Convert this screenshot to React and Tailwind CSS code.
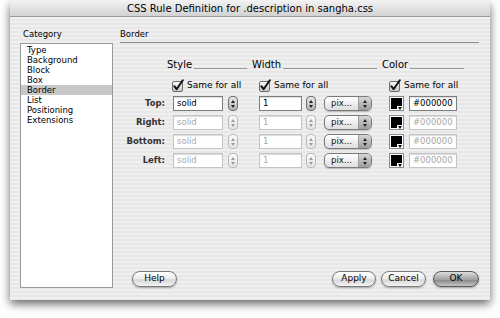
import { Fragment } from 'react'

const FONT = { fontFamily: '"DejaVu Sans", "Lucida Grande", sans-serif' }

const categories = ['Type', 'Background', 'Block', 'Box', 'Border', 'List', 'Positioning', 'Extensions']
const sides = ['Top', 'Right', 'Bottom', 'Left']

function Check({ className = '' }) {
  return (
    <svg width="13" height="13" viewBox="0 0 13 13" className={className}>
      <defs>
        <linearGradient id="cbg" x1="0" y1="0" x2="0" y2="1">
          <stop offset="0" stopColor="#ffffff" />
          <stop offset="1" stopColor="#c4c4c4" />
        </linearGradient>
      </defs>
      <rect x="0.5" y="2.5" width="10" height="10" rx="1.5" fill="url(#cbg)" stroke="#6d6d6d" />
      <path d="M2.3 7.2 L4.6 10.2 L10.8 1.2" fill="none" stroke="#111" strokeWidth="2" strokeLinecap="round" strokeLinejoin="round" />
    </svg>
  )
}

function Stepper({ off }) {
  return (
    <div
      className={`w-[10px] h-[15px] rounded-[4px] border flex flex-col items-center justify-center gap-[2px] ${
        off
          ? 'border-[#b8b8b8] bg-[linear-gradient(#fafafa,#e6e6e6)]'
          : 'border-[#707070] bg-[linear-gradient(#e8e8e8,#b4b4b4)]'
      }`}
    >
      <svg width="4" height="3" viewBox="0 0 4 3">
        <path d="M0 3 L2 0 L4 3 Z" fill={off ? '#9a9a9a' : '#222'} />
      </svg>
      <svg width="4" height="3" viewBox="0 0 4 3">
        <path d="M0 0 L2 3 L4 0 Z" fill={off ? '#9a9a9a' : '#222'} />
      </svg>
    </div>
  )
}

function Field({ value, off, w }) {
  return (
    <div
      className={`${w} h-[15px] bg-white border px-[3px] text-[8.5px] leading-[13px] shadow-[inset_0_1px_1px_rgba(0,0,0,0.15)] ${
        off ? 'border-[#c4c4c4] text-[#a8a8a8]' : 'border-[#7e7e7e] text-black'
      }`}
    >
      {value}
    </div>
  )
}

function Popup() {
  return (
    <div className="w-[48px] h-[15px] rounded-[5px] border border-[#7a7a7a] flex overflow-hidden bg-[linear-gradient(#ffffff,#dedede)] shadow-[0_1px_1px_rgba(0,0,0,0.2)]">
      <div className="flex-1 pl-[6px] text-[8.5px] leading-[13px] text-[#111]">pix...</div>
      <div className="w-[13px] flex flex-col items-center justify-center gap-[2px] bg-[linear-gradient(#d6d6d6,#9e9e9e)] border-l border-[#9a9a9a]">
        <svg width="4" height="3" viewBox="0 0 4 3">
          <path d="M0 3 L2 0 L4 3 Z" fill="#222" />
        </svg>
        <svg width="4" height="3" viewBox="0 0 4 3">
          <path d="M0 0 L2 3 L4 0 Z" fill="#222" />
        </svg>
      </div>
    </div>
  )
}

function Swatch() {
  return (
    <div className="relative w-[15px] h-[15px] border border-[#8a8a8a] bg-white p-[1px]">
      <div className="w-full h-full bg-black" />
      <div className="absolute right-0 bottom-0 w-[6px] h-[4px] bg-white flex items-center justify-center">
        <svg width="4" height="3" viewBox="0 0 4 3">
          <path d="M0 0 L2 3 L4 0 Z" fill="#000" />
        </svg>
      </div>
    </div>
  )
}

function AquaButton({ children, w, dark }) {
  return (
    <div
      className={`${w} h-[16px] rounded-full border flex items-center justify-center text-[9px] text-black shadow-[0_1px_2px_rgba(0,0,0,0.3)] ${
        dark
          ? 'border-[#5a5a5a] bg-[linear-gradient(#dcdcdc,#a0a0a0_55%,#8c8c8c_60%,#c4c4c4)]'
          : 'border-[#7a7a7a] bg-[linear-gradient(#ffffff,#ececec_50%,#d6d6d6_55%,#f4f4f4)]'
      }`}
    >
      {children}
    </div>
  )
}

function Heading({ label, w }) {
  return (
    <div className={`${w} flex items-end`}>
      <span className="text-[10px] leading-[12px] text-black">{label}</span>
      <div className="flex-1 h-px bg-[#9a9a9a] ml-[2px] mb-[2px]" />
    </div>
  )
}

export default function App() {
  return (
    <div className="w-[500px] h-[318px] bg-white overflow-hidden" style={FONT}>
      <div className="ml-[10px] w-[480px] h-[300px] rounded-t-[5px] shadow-[0_4px_10px_rgba(0,0,0,0.6)] flex flex-col overflow-hidden">
        {/* title bar */}
        <div className="h-[17px] bg-[linear-gradient(#f3f3f3,#d2d2d2)] border-b border-[#9c9c9c] text-[10px] leading-[18px] text-center text-black">
          CSS Rule Definition for .description in sangha.css
        </div>

        <div className="flex-1 flex bg-[repeating-linear-gradient(#efefef_0px,#efefef_2px,#e7e7e7_2px,#e7e7e7_4px)]">
          {/* category list */}
          <div className="ml-[10px] w-[93px] pt-[11px] pb-[12px] flex flex-col">
            <div className="pl-[3px] h-[12px] text-[8.5px] leading-[12px] text-black">Category</div>
            <div className="mt-[3px] flex-1 bg-white border border-[#9a9a9a] pt-[1px]">
              {categories.map((c) => (
                <div
                  key={c}
                  className={`pl-[6px] h-[10px] text-[8.5px] leading-[10px] text-black ${c === 'Border' ? 'bg-[#c8c8c8]' : ''}`}
                >
                  {c}
                </div>
              ))}
            </div>
          </div>

          {/* panel */}
          <div className="ml-[7px] w-[359px] pt-[11px] pb-[13px] flex flex-col">
            <div className="h-[15px] border-b border-[#8c8c8c] text-[8.5px] leading-[12px] text-black">Border</div>

            <div className="mt-[16px] ml-[47px] flex gap-[5px]">
              <Heading label="Style" w="w-[80px]" />
              <Heading label="Width" w="w-[125px]" />
              <Heading label="Color" w="w-[82px]" />
            </div>

            <div className="mt-[8px] h-[13px] flex items-center text-[9px] text-black">
              <div className="ml-[52px] w-[87px] flex items-center gap-[2px]">
                <Check />
                <span>Same for all</span>
              </div>
              <div className="w-[130px] flex items-center gap-[2px]">
                <Check />
                <span>Same for all</span>
              </div>
              <div className="flex items-center gap-[2px]">
                <Check />
                <span>Same for all</span>
              </div>
            </div>

            <div className="mt-[4px] flex flex-col gap-[4px]">
              {sides.map((s, i) => {
                const off = i > 0
                return (
                  <div key={s} className="h-[15px] flex items-center">
                    <div className="w-[45px] text-right text-[8.5px] font-bold text-[#333]">{s}:</div>
                    <div className="ml-[8px]">
                      <Field value="solid" off={off} w="w-[50px]" />
                    </div>
                    <div className="ml-[5px]">
                      <Stepper off={off} />
                    </div>
                    <div className="ml-[21px]">
                      <Field value="1" off={off} w="w-[43px]" />
                    </div>
                    <div className="ml-[4px]">
                      <Stepper off={off} />
                    </div>
                    <div className="ml-[8px]">
                      <Popup />
                    </div>
                    <div className="ml-[17px]">
                      <Swatch />
                    </div>
                    <div className="ml-[5px]">
                      <Field value="#000000" off={off} w="w-[48px]" />
                    </div>
                  </div>
                )
              })}
            </div>

            <div className="mt-auto flex items-center">
              <div className="ml-[12px]">
                <AquaButton w="w-[45px]">Help</AquaButton>
              </div>
              <div className="ml-auto flex items-center">
                <AquaButton w="w-[44px]">Apply</AquaButton>
                <div className="ml-[5px]">
                  <AquaButton w="w-[45px]">Cancel</AquaButton>
                </div>
                <div className="ml-[7px]">
                  <AquaButton w="w-[46px]" dark>OK</AquaButton>
                </div>
              </div>
            </div>
          </div>
        </div>
      </div>
    </div>
  )
}
